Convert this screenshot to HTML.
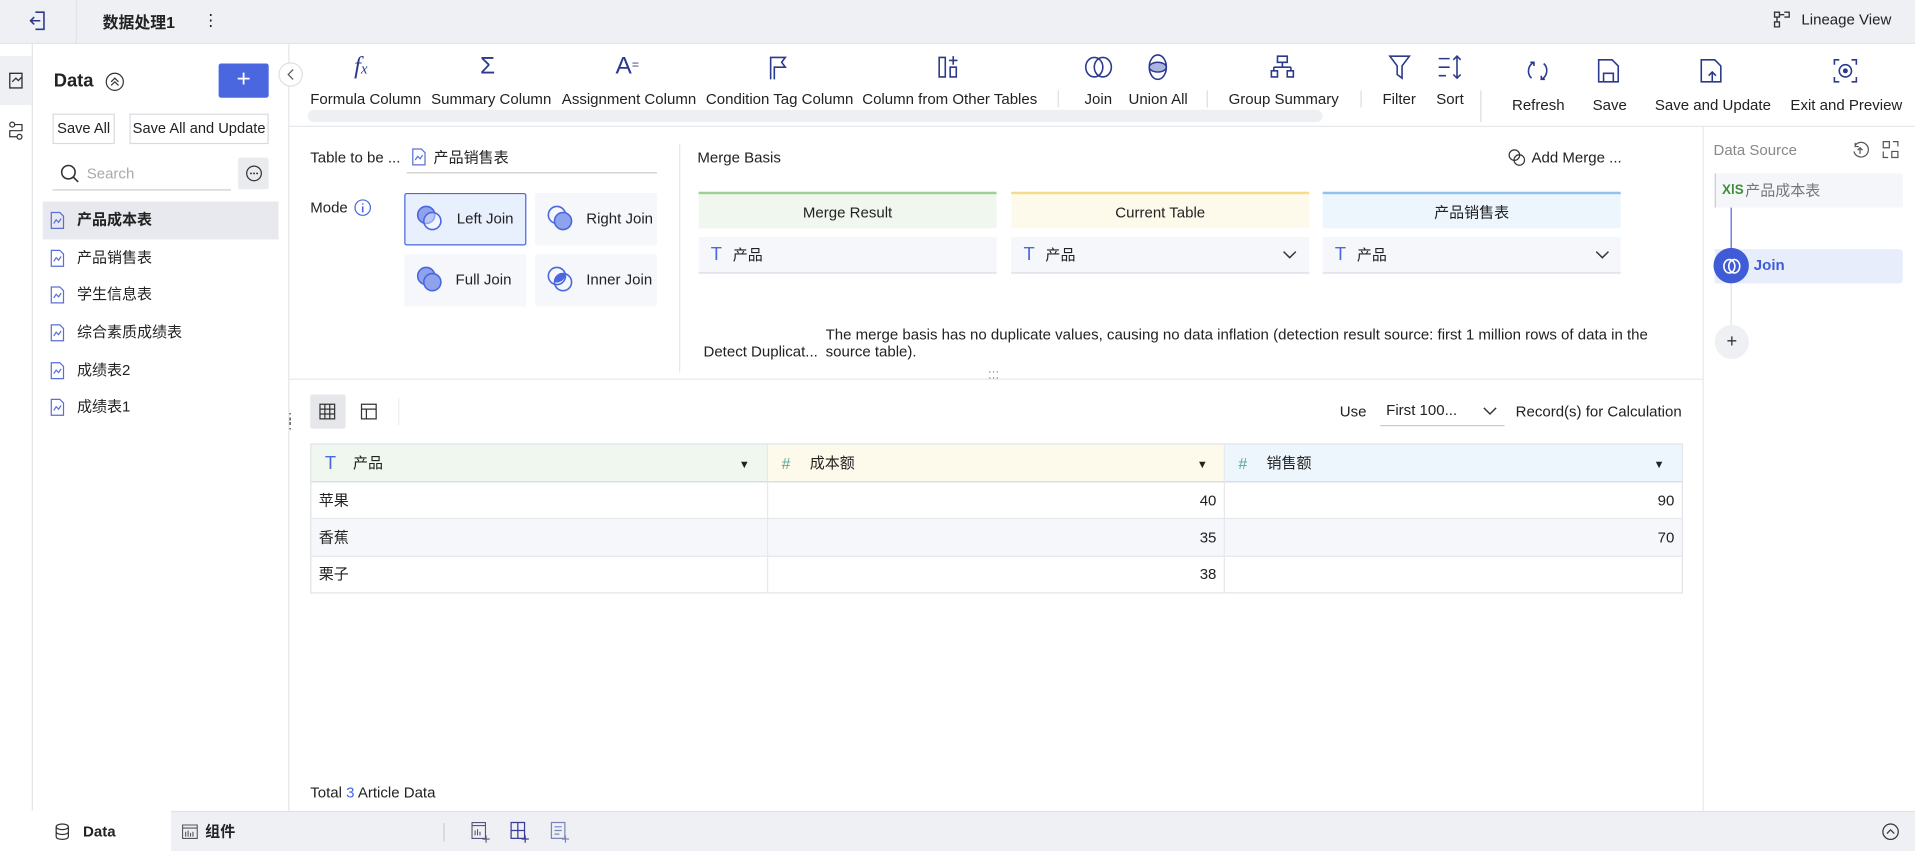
<!DOCTYPE html>
<html><head><meta charset="utf-8"><style>
*{box-sizing:border-box;margin:0;padding:0}
body{width:1915px;height:850px;overflow:hidden;background:#fff;font-family:"Liberation Sans","Noto Sans CJK SC",sans-serif;color:#222}
#w{position:absolute;left:0;top:0;width:1568px;height:697px;transform:scale(1.2213);transform-origin:0 0;font-size:12.3px}
.a{position:absolute;white-space:nowrap;line-height:15px}
svg{position:absolute;overflow:visible}
.ic{stroke:#2b3a8c;fill:none;stroke-width:1.3}
.li{position:absolute;left:35px;width:193px;height:31px;line-height:31px;padding-left:28px;font-size:12.3px}
.btn{position:absolute;border:1px solid #d8dbe2;background:#fff;text-align:center;line-height:23px;font-size:12px;white-space:nowrap}
.jb{position:absolute;width:100px;height:43px;background:#f5f7fb;border-radius:2px;line-height:43px;padding-left:42px;font-size:12.3px;white-space:nowrap}
.hd{position:absolute;height:30px;line-height:30px;text-align:center;font-size:12.3px;top:157px;width:244px}
.sel{position:absolute;top:194px;width:244px;height:30px;line-height:30px;background:#f5f7fb;border-bottom:1px solid #d6d9e0;padding-left:28px;font-size:12.3px}
.tc{position:absolute;height:31px;line-height:31px;border-right:1px solid #e6e8ed;font-size:12.3px;padding:0 6px}
</style></head><body><div id="w">
<!-- top bar -->
<div class="a" style="left:0;top:0;width:1568px;height:36px;background:#eef0f4;border-bottom:1px solid #e3e5ea"></div>
<div class="a" style="left:62px;top:0;width:1px;height:36px;background:#e0e2e8"></div>
<svg style="left:24px;top:9px" width="14" height="16"><path class="ic" d="M5 1H12V15H5M1 8H9M4 5L1 8L4 11" stroke="#333"/></svg>
<div class="a" style="left:84px;top:11px;font-weight:bold;font-size:13px">数据处理1</div>
<div class="a" style="left:166px;top:9px;font-size:13px">⋮</div>
<svg style="left:1452px;top:9px" width="14" height="14"><path d="M1 1h4v4H1zM1 9h4v4H1zM5 3h4M9 1h4v4H9M3 5v4" fill="none" stroke="#333" stroke-width="1.1"/></svg>
<div class="a" style="left:1475px;top:9px">Lineage View</div>
<!-- left rail -->
<div class="a" style="left:26px;top:36px;width:1px;height:628px;background:#e3e5ea"></div>
<div class="a" style="left:0;top:46px;width:26px;height:40px;background:#eef0f4"></div>
<svg style="left:6px;top:58px" width="14" height="16"><path d="M2 2h10v12H2zM4 9l3-3 2 2 3-3" fill="none" stroke="#333" stroke-width="1.1"/></svg>
<svg style="left:6px;top:99px" width="14" height="16"><circle cx="4" cy="3" r="2" fill="none" stroke="#333"/><circle cx="10" cy="13" r="2" fill="none" stroke="#333"/><path d="M6 3h6v5H2v5h6" fill="none" stroke="#333"/></svg>
<!-- left panel -->
<div class="a" style="left:236px;top:36px;width:1px;height:628px;background:#e3e5ea"></div>
<div class="a" style="left:44px;top:58px;font-weight:bold;font-size:15px;line-height:17px">Data</div>
<svg style="left:86px;top:59px" width="16" height="16"><circle cx="8" cy="8" r="7" fill="none" stroke="#333"/><path d="M5 8l3-3 3 3M5 11l3-3 3 3" fill="none" stroke="#333"/></svg>
<div class="a" style="left:179px;top:52px;width:41px;height:28px;background:#4a67e0;border-radius:2px;color:#fff;text-align:center;line-height:27px;font-size:20px">+</div>
<div class="btn" style="left:43px;top:93px;width:51px;height:25px">Save All</div>
<div class="btn" style="left:106px;top:93px;width:114px;height:25px">Save All and Update</div>
<svg style="left:49px;top:134px" width="16" height="16"><circle cx="7" cy="7" r="5.5" fill="none" stroke="#333" stroke-width="1.3"/><path d="M11 11l4 4" stroke="#333" stroke-width="1.3"/></svg>
<div class="a" style="left:71px;top:135px;color:#aaa">Search</div>
<div class="a" style="left:43px;top:155px;width:146px;height:1px;background:#ccc"></div>
<div class="a" style="left:195px;top:129px;width:25px;height:26px;background:#eaebee;border-radius:2px"></div>
<svg style="left:201px;top:135px" width="14" height="14"><circle cx="7" cy="7" r="6" fill="none" stroke="#333"/><circle cx="4.5" cy="7" r=".8" fill="#333"/><circle cx="7" cy="7" r=".8" fill="#333"/><circle cx="9.5" cy="7" r=".8" fill="#333"/></svg>
<div class="li" style="top:165px;background:#e8e9ee;font-weight:bold">产品成本表</div>
<div class="li" style="top:196px">产品销售表</div>
<div class="li" style="top:226px">学生信息表</div>
<div class="li" style="top:257px">综合素质成绩表</div>
<div class="li" style="top:288px">成绩表2</div>
<div class="li" style="top:318px">成绩表1</div>
<svg style="left:41px;top:173px" width="12" height="170"><g fill="none" stroke="#5a6fd6" stroke-width="1"><path d="M1 1h7l3 3v10H1zM3 10l2-3 2 2 2-3"/><path transform="translate(0,31)" d="M1 1h7l3 3v10H1zM3 10l2-3 2 2 2-3"/><path transform="translate(0,61)" d="M1 1h7l3 3v10H1zM3 10l2-3 2 2 2-3"/><path transform="translate(0,92)" d="M1 1h7l3 3v10H1zM3 10l2-3 2 2 2-3"/><path transform="translate(0,123)" d="M1 1h7l3 3v10H1zM3 10l2-3 2 2 2-3"/><path transform="translate(0,153)" d="M1 1h7l3 3v10H1zM3 10l2-3 2 2 2-3"/></g></svg>
<div class="a" style="left:228px;top:51px;width:20px;height:20px;border-radius:50%;border:1px solid #dde0e6;background:#fff"></div>
<svg style="left:235px;top:56px" width="6" height="10"><path d="M5 1L1 5l4 4" fill="none" stroke="#555"/></svg>
<div class="a" style="left:232px;top:341px;color:#555;font-size:11px;line-height:5px">⋮<br>⋮</div>
<!-- toolbar -->
<div class="a" style="left:237px;top:103px;width:1331px;height:1px;background:#e6e8ed"></div>
<div class="a" style="left:252px;top:90px;width:831px;height:10px;background:#eeeff2;border-radius:5px"></div>
<div class="a" style="left:290px;top:44px;font-style:italic;font-family:'Liberation Serif',serif;font-size:20px;line-height:20px;color:#2b3a8c">f<span style="font-size:12px">x</span></div>
<div class="a" style="left:393px;top:44px;font-size:20px;line-height:20px;color:#2b3a8c">Σ</div>
<div class="a" style="left:504px;top:44px;font-size:20px;line-height:20px;color:#2b3a8c">A<span style="font-size:10px;vertical-align:top">=</span></div>
<svg style="left:630px;top:46px" width="16" height="20"><path class="ic" d="M1 19V1h12l-3 4 3 4H4v10"/></svg>
<svg style="left:768px;top:45px" width="20" height="20"><path class="ic" d="M1 2h5v16H1zM10 10h5v8h-5zM12.5 1v7M9 4.5h7"/></svg>
<svg style="left:888px;top:45px" width="24" height="20"><ellipse cx="8" cy="10" rx="7" ry="8" class="ic"/><ellipse cx="15" cy="10" rx="7" ry="8" class="ic"/></svg>
<svg style="left:939px;top:44px" width="18" height="22"><ellipse cx="9" cy="11" rx="7" ry="10" class="ic"/><ellipse cx="9" cy="11" rx="7" ry="4" fill="#aab4e0" stroke="#2b3a8c" stroke-width="1.2"/></svg>
<svg style="left:1040px;top:45px" width="20" height="20"><path class="ic" d="M6 1h8v5H6zM10 6v4M3 10h14M3 10v3M17 10v3M1 13h5v5H1zM14 13h5v5h-5z"/></svg>
<svg style="left:1137px;top:45px" width="18" height="20"><path class="ic" d="M1 1h16l-6 8v10l-4-3V9z"/></svg>
<svg style="left:1177px;top:45px" width="22" height="20"><path class="ic" d="M1 3h9M1 10h9M1 17h6M16 1v18M13 4l3-3 3 3M13 16l3 3 3-3"/></svg>
<svg style="left:1249px;top:48px" width="20" height="20"><path class="ic" d="M15 4a8 8 0 0 1-2 13M5 16A8 8 0 0 1 7 3M13 14v3h3M7 6V3H4" stroke-width="1.6"/></svg>
<svg style="left:1308px;top:48px" width="18" height="20"><path class="ic" d="M1 1h11l5 5v13H1zM5 19v-7h8v7" stroke-width="1.4"/></svg>
<svg style="left:1392px;top:48px" width="18" height="20"><path class="ic" d="M1 1h11l5 5v13H1zM10 19v-7M7 14l3-3 3 3" stroke-width="1.4"/></svg>
<svg style="left:1501px;top:48px" width="20" height="20"><path class="ic" d="M1 5V1h4M15 1h4v4M19 15v4h-4M5 19H1v-4" stroke-width="1.4"/><circle cx="10" cy="10" r="5" class="ic" stroke-width="1.4"/><circle cx="10" cy="10" r="2" fill="#2b3a8c"/></svg>
<div class="a" style="left:254px;top:74px">Formula Column</div>
<div class="a" style="left:353px;top:74px">Summary Column</div>
<div class="a" style="left:460px;top:74px">Assignment Column</div>
<div class="a" style="left:578px;top:74px">Condition Tag Column</div>
<div class="a" style="left:706px;top:74px">Column from Other Tables</div>
<div class="a" style="left:866px;top:74px;width:1px;height:14px;background:#ddd"></div>
<div class="a" style="left:888px;top:74px">Join</div>
<div class="a" style="left:924px;top:74px">Union All</div>
<div class="a" style="left:988px;top:74px;width:1px;height:14px;background:#ddd"></div>
<div class="a" style="left:1006px;top:74px">Group Summary</div>
<div class="a" style="left:1114px;top:74px;width:1px;height:14px;background:#ddd"></div>
<div class="a" style="left:1132px;top:74px">Filter</div>
<div class="a" style="left:1176px;top:74px">Sort</div>
<div class="a" style="left:1212px;top:74px;width:1px;height:26px;background:#ddd"></div>
<div class="a" style="left:1238px;top:79px">Refresh</div>
<div class="a" style="left:1304px;top:79px">Save</div>
<div class="a" style="left:1355px;top:79px">Save and Update</div>
<div class="a" style="left:1466px;top:79px">Exit and Preview</div>
<!-- config -->
<div class="a" style="left:254px;top:122px">Table to be ...</div>
<svg style="left:337px;top:121px" width="12" height="15"><path d="M1 1h7l3 3v10H1zM3 10l2-3 2 2 2-3" fill="none" stroke="#5a6fd6"/></svg>
<div class="a" style="left:355px;top:122px">产品销售表</div>
<div class="a" style="left:333px;top:141px;width:205px;height:1px;background:#ccc"></div>
<div class="a" style="left:254px;top:163px">Mode</div>
<svg style="left:290px;top:163px" width="14" height="14"><circle cx="7" cy="7" r="6.3" fill="none" stroke="#4a67e0"/><path d="M7 6v5M7 3.5v1" stroke="#4a67e0" stroke-width="1.3"/></svg>
<div class="jb" style="left:331px;top:158px;background:#e8effd;border:1px solid #4a67e0;line-height:41px">Left Join</div>
<div class="jb" style="left:438px;top:158px">Right Join</div>
<div class="jb" style="left:331px;top:208px">Full Join</div>
<div class="jb" style="left:438px;top:208px">Inner Join</div>
<svg style="left:341px;top:168px" width="22" height="22"><circle cx="8" cy="8" r="7" fill="#8fa3ec" stroke="#4a67e0" stroke-width="1.3"/><circle cx="13" cy="13" r="7" fill="#fff" fill-opacity=".4" stroke="#4a67e0" stroke-width="1.3"/></svg>
<svg style="left:448px;top:168px" width="22" height="22"><circle cx="8" cy="8" r="7" fill="none" stroke="#4a67e0" stroke-width="1.3"/><circle cx="13" cy="13" r="7" fill="#8fa3ec" stroke="#4a67e0" stroke-width="1.3"/></svg>
<svg style="left:341px;top:218px" width="22" height="22"><circle cx="8" cy="8" r="7" fill="#8fa3ec" stroke="#4a67e0" stroke-width="1.3"/><circle cx="13" cy="13" r="7" fill="#8fa3ec" stroke="#4a67e0" stroke-width="1.3"/></svg>
<svg style="left:448px;top:218px" width="22" height="22"><circle cx="8" cy="8" r="7" fill="none" stroke="#4a67e0" stroke-width="1.3"/><circle cx="13" cy="13" r="7" fill="none" stroke="#4a67e0" stroke-width="1.3"/><path d="M6 13a7 7 0 0 0 9-7 7 7 0 0 0-9 7z" fill="#4a67e0"/></svg>
<div class="a" style="left:556px;top:118px;width:1px;height:187px;background:#e6e8ed"></div>
<div class="a" style="left:571px;top:122px">Merge Basis</div>
<svg style="left:1235px;top:122px" width="14" height="14"><circle cx="5" cy="5" r="4.3" fill="none" stroke="#333"/><circle cx="9" cy="9" r="4.3" fill="none" stroke="#333"/></svg>
<div class="a" style="left:1254px;top:122px">Add Merge ...</div>
<div class="hd" style="left:572px;background:#f0f7ee;border-top:2px solid #9fcf94">Merge Result</div>
<div class="hd" style="left:828px;background:#fdfaeb;border-top:2px solid #f5dc8a">Current Table</div>
<div class="hd" style="left:1083px;background:#eef6fd;border-top:2px solid #90c3f3">产品销售表</div>
<div class="sel" style="left:572px">产品</div>
<div class="sel" style="left:828px">产品</div>
<div class="sel" style="left:1083px">产品</div>
<div class="a" style="left:582px;top:201px;color:#4a67e0;font-size:15px">T</div>
<div class="a" style="left:838px;top:201px;color:#4a67e0;font-size:15px">T</div>
<div class="a" style="left:1093px;top:201px;color:#4a67e0;font-size:15px">T</div>
<svg style="left:1050px;top:205px" width="12" height="7"><path d="M1 1l5 5 5-5" fill="none" stroke="#333" stroke-width="1.2"/></svg>
<svg style="left:1306px;top:205px" width="12" height="7"><path d="M1 1l5 5 5-5" fill="none" stroke="#333" stroke-width="1.2"/></svg>
<div class="a" style="left:676px;top:267px;line-height:14px">The merge basis has no duplicate values, causing no data inflation (detection result source: first 1 million rows of data in the<br>source table).</div>
<div class="a" style="left:576px;top:281px">Detect Duplicat...</div>
<div class="a" style="left:237px;top:310px;width:1157px;height:1px;background:#e6e8ed"></div>
<div class="a" style="left:809px;top:302px;font-size:9px;line-height:5px;color:#666">···<br>···</div>
<!-- right panel -->
<div class="a" style="left:1394px;top:104px;width:1px;height:560px;background:#e6e8ed"></div>
<div class="a" style="left:1403px;top:116px;color:#888">Data Source</div>
<svg style="left:1516px;top:116px" width="14" height="14"><path d="M3 3a6 6 0 1 1-1 5M3 1v3h3M7 10V5M5 7l2-2 2 2" fill="none" stroke="#555"/></svg>
<svg style="left:1541px;top:115px" width="14" height="15"><path d="M1 1h5v5H1zM8 9h5v5H8zM9 1h4v4M1 9v5h4" fill="none" stroke="#555"/></svg>
<div class="a" style="left:1404px;top:142px;width:154px;height:28px;background:#f5f6f9;border-left:1px solid #ccc"></div>
<div class="a" style="left:1410px;top:149px;color:#3f8f3a;font-weight:bold;font-size:11px">XlS</div>
<div class="a" style="left:1429px;top:149px;color:#777">产品成本表</div>
<div class="a" style="left:1417px;top:170px;width:1px;height:34px;background:#4a67e0"></div>
<div class="a" style="left:1417px;top:232px;width:1px;height:34px;background:#e0e2e8"></div>
<div class="a" style="left:1404px;top:204px;width:154px;height:28px;background:#e8edfb;border-radius:0 3px 3px 0"></div>
<div class="a" style="left:1403px;top:203px;width:29px;height:29px;border-radius:50%;background:#3f5bd6"></div>
<svg style="left:1410px;top:211px" width="16" height="14"><ellipse cx="6" cy="7" rx="4.5" ry="5.5" fill="none" stroke="#fff" stroke-width="1.3"/><ellipse cx="10" cy="7" rx="4.5" ry="5.5" fill="none" stroke="#fff" stroke-width="1.3"/></svg>
<div class="a" style="left:1436px;top:210px;color:#3f5bd6;font-weight:bold">Join</div>
<div class="a" style="left:1404px;top:266px;width:28px;height:28px;border-radius:50%;background:#eef0f4;text-align:center;line-height:27px;font-size:15px;color:#333">+</div>
<!-- table area -->
<div class="a" style="left:254px;top:323px;width:29px;height:28px;background:#e6e7ea;border-radius:2px"></div>
<svg style="left:261px;top:330px" width="14" height="14"><path d="M1 1h12v12H1zM1 5h12M1 9h12M5 1v12M9 1v12" fill="none" stroke="#333"/></svg>
<svg style="left:295px;top:330px" width="14" height="14"><path d="M1 1h12v12H1zM1 5h12M5 5v8" fill="none" stroke="#333"/></svg>
<div class="a" style="left:326px;top:326px;width:1px;height:22px;background:#eee"></div>
<div class="a" style="left:1097px;top:330px">Use</div>
<div class="a" style="left:1135px;top:329px">First 100...</div>
<svg style="left:1214px;top:333px" width="12" height="7"><path d="M1 1l5 5 5-5" fill="none" stroke="#333" stroke-width="1.2"/></svg>
<div class="a" style="left:1130px;top:348px;width:102px;height:1px;background:#ccc"></div>
<div class="a" style="left:1241px;top:330px">Record(s) for Calculation</div>
<div class="a" style="left:254px;top:363px;width:1124px;height:123px;border:1px solid #e0e3e8"></div>
<div class="tc" style="left:255px;top:364px;width:374px;background:#f0f7ee;border-bottom:1px solid #d6d9e0;padding-left:34px">产品</div>
<div class="tc" style="left:629px;top:364px;width:374px;background:#fdfaeb;border-bottom:1px solid #d6d9e0;padding-left:34px">成本额</div>
<div class="tc" style="left:1003px;top:364px;width:374px;background:#eef6fd;border-bottom:1px solid #d6d9e0;border-right:0;padding-left:34px">销售额</div>
<div class="a" style="left:266px;top:372px;color:#4a67e0;font-size:15px">T</div>
<div class="a" style="left:640px;top:372px;color:#5aa8a0;font-size:13px">#</div>
<div class="a" style="left:1014px;top:372px;color:#5aa8a0;font-size:13px">#</div>
<div class="a" style="left:605px;top:373px;font-size:9px">▼</div>
<div class="a" style="left:980px;top:373px;font-size:9px">▼</div>
<div class="a" style="left:1354px;top:373px;font-size:9px">▼</div>
<div class="tc" style="left:255px;top:395px;width:374px">苹果</div>
<div class="tc" style="left:629px;top:395px;width:374px;text-align:right">40</div>
<div class="tc" style="left:1003px;top:395px;width:374px;text-align:right;border-right:0">90</div>
<div class="a" style="left:255px;top:424px;width:1122px;height:1px;background:#e6e8ed"></div>
<div class="tc" style="left:255px;top:425px;width:374px;background:#f6f7fa">香蕉</div>
<div class="tc" style="left:629px;top:425px;width:374px;text-align:right;background:#f6f7fa">35</div>
<div class="tc" style="left:1003px;top:425px;width:374px;text-align:right;border-right:0;background:#f6f7fa">70</div>
<div class="a" style="left:255px;top:455px;width:1122px;height:1px;background:#e6e8ed"></div>
<div class="tc" style="left:255px;top:455px;width:374px">栗子</div>
<div class="tc" style="left:629px;top:455px;width:374px;text-align:right">38</div>
<div class="tc" style="left:1003px;top:455px;width:374px;border-right:0"></div>
<div class="a" style="left:254px;top:642px">Total <span style="color:#4a67e0">3</span> Article Data</div>
<!-- bottom bar -->
<div class="a" style="left:0;top:664px;width:1568px;height:33px;background:#eef0f4;border-top:1px solid #dfe1e6"></div>
<div class="a" style="left:0;top:664px;width:140px;height:33px;background:#fff"></div>
<svg style="left:45px;top:674px" width="12" height="14"><ellipse cx="6" cy="3" rx="5" ry="2.3" fill="none" stroke="#333"/><path d="M1 3v8c0 3 10 3 10 0V3M1 7c0 3 10 3 10 0" fill="none" stroke="#333"/></svg>
<div class="a" style="left:68px;top:674px;font-weight:bold">Data</div>
<svg style="left:149px;top:675px" width="13" height="12"><path d="M.5.5h12v11H.5zM.5 3h12M3 10V6M5 10V5M7 10V7M9 10V6" fill="none" stroke="#555" stroke-width=".9"/></svg>
<div class="a" style="left:168px;top:674px;font-weight:bold">组件</div>
<div class="a" style="left:363px;top:674px;width:1px;height:15px;background:#ccc"></div>
<svg style="left:386px;top:673px" width="16" height="17"><path d="M.5.5h11v13H.5zM.5 3h11M3 11V7M5 11V6M7 11V8M12 11v6M9 14h6" fill="none" stroke="#557" stroke-width=".9"/></svg>
<svg style="left:418px;top:673px" width="16" height="17"><path d="M.5.5h11v13H.5zM.5 7h11M6 .5v13M12 11v6M9 14h6" fill="none" stroke="#3b3b9a" stroke-width="1"/></svg>
<svg style="left:451px;top:673px" width="16" height="17"><path d="M.5.5h11v13H.5zM3 4h6M3 7h6M3 10h4M12 11v6M9 14h6" fill="none" stroke="#7a86b8" stroke-width="1"/></svg>
<svg style="left:1541px;top:674px" width="14" height="14"><circle cx="7" cy="7" r="6.3" fill="none" stroke="#333"/><path d="M4 8.5l3-3 3 3" fill="none" stroke="#333"/></svg>
</div></body></html>
